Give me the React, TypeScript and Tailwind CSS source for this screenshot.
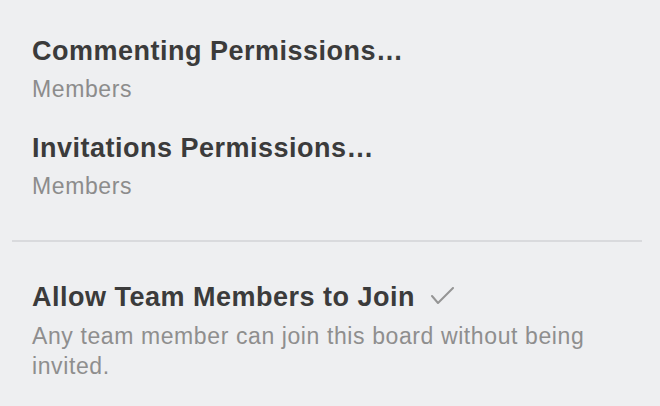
const permissions = [
  { title: "Commenting Permissions…", value: "Members" },
  { title: "Invitations Permissions…", value: "Members" },
];

export default function App() {
  return (
    <div className="w-[660px] h-[406px] overflow-hidden bg-[#eeeff1] font-['Liberation_Sans',Arial,sans-serif]">
      <div className="px-8 pt-[36px]">
        {permissions.map((item, i) => (
          <div key={item.title} className={i > 0 ? "mt-[29px]" : ""}>
            <div className="text-[27px] leading-[30px] font-bold tracking-[0.5px] text-[#3b3b3b]">
              {item.title}
            </div>
            <div className="mt-[8px] text-[23px] leading-[30px] tracking-[0.6px] text-[#8c8c8c]">
              {item.value}
            </div>
          </div>
        ))}
      </div>

      <div className="mt-[39px] ml-3 mr-[18px] h-[2px] bg-[#d9dadd]" />

      <div className="px-8 pt-[40px]">
        <div className="flex items-center text-[27px] leading-[30px] font-bold tracking-[0.5px] text-[#3b3b3b]">
          <span>Allow Team Members to Join</span>
          <svg
            className="ml-[15px]"
            width="24"
            height="20"
            viewBox="0 0 24 20"
            fill="none"
            stroke="#959595"
            strokeWidth="2"
            strokeLinecap="round"
            strokeLinejoin="round"
          >
            <polyline points="2,9 8,16 23,1" />
          </svg>
        </div>
        <p className="mt-[9px] text-[23px] leading-[30px] tracking-[0.6px] text-[#8e8e8e]">
          Any team member can join this board without being invited.
        </p>
      </div>
    </div>
  );
}
